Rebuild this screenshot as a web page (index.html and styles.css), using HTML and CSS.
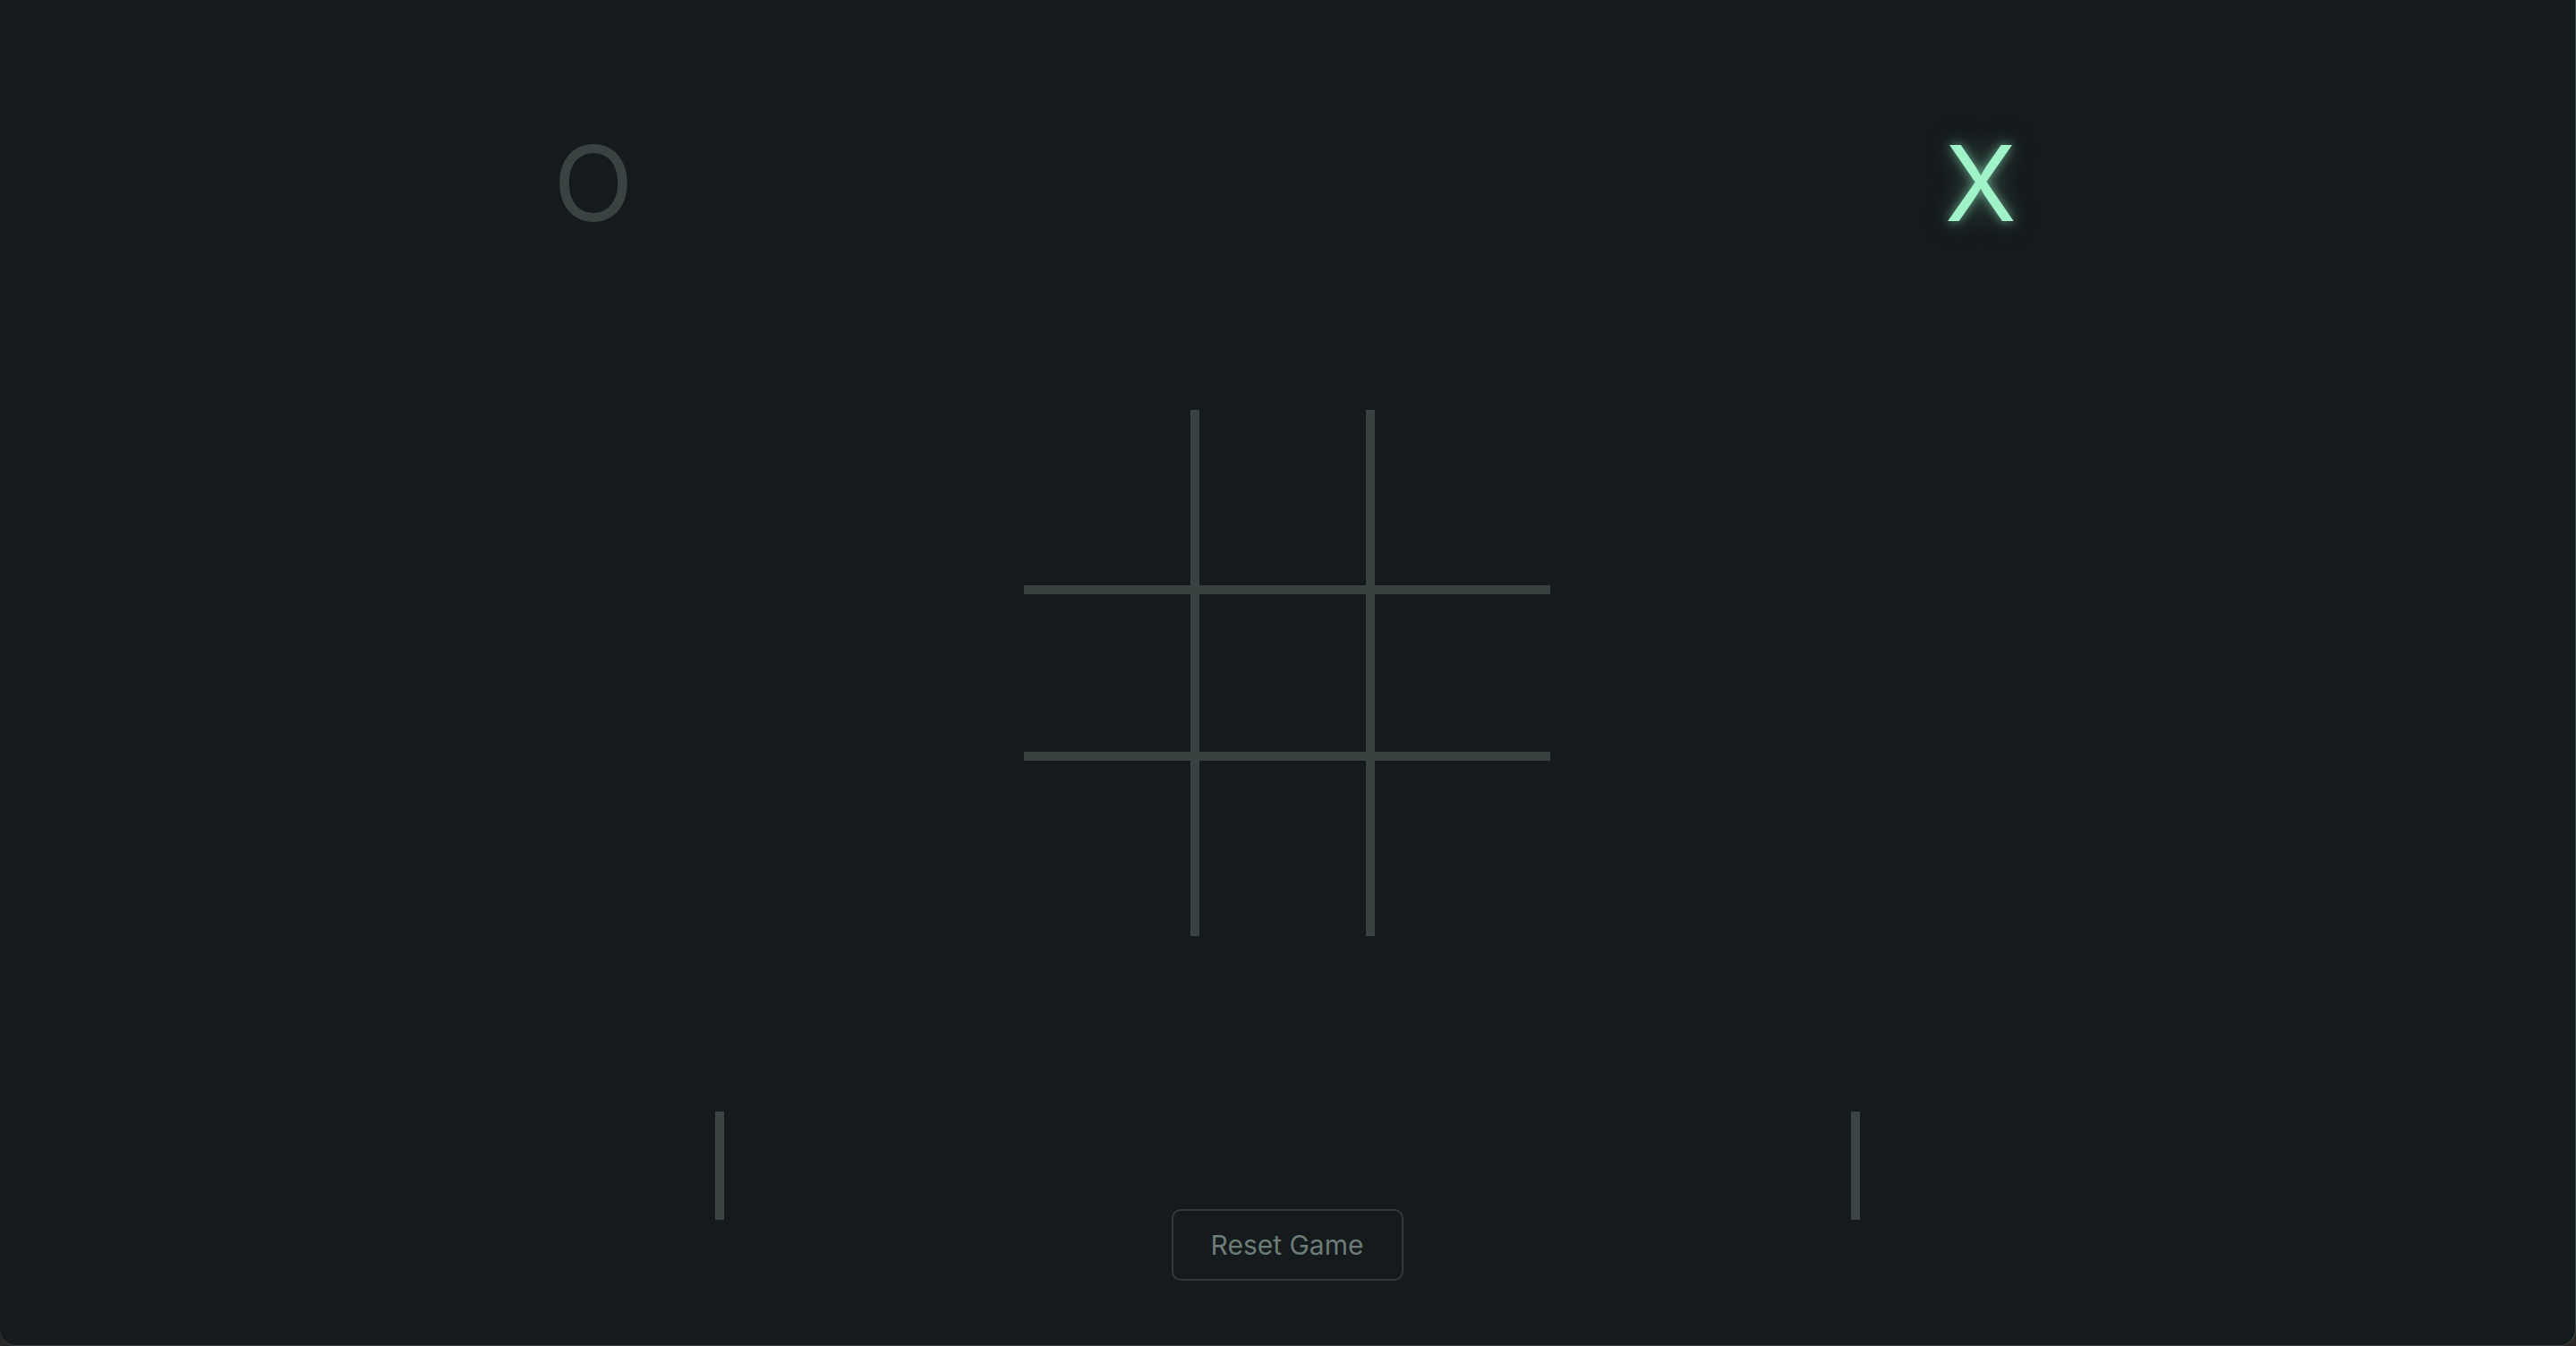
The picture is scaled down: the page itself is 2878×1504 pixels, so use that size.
FILE: index.html
```html
<!DOCTYPE html>
<html lang="en">
<head>
<meta charset="utf-8">
<title>Tic Tac Toe</title>
<link rel="stylesheet" href="styles.css">
</head>
<body>
<div class="window">
  <header class="players">
    <div class="player player-o">O</div>
    <div class="player player-x active">X</div>
  </header>
  <main class="board">
    <div class="cell c-left"></div>
    <div class="cell c-mid"></div>
    <div class="cell"></div>
    <div class="cell c-left r-mid"></div>
    <div class="cell c-mid r-mid"></div>
    <div class="cell r-mid"></div>
    <div class="cell c-left"></div>
    <div class="cell c-mid"></div>
    <div class="cell"></div>
  </main>
  <footer class="footer">
    <div class="tally"></div>
    <button class="reset">Reset Game</button>
    <div class="tally"></div>
  </footer>
</div>
</body>
</html>
```
FILE: styles.css
```css
html, body {
  margin: 0;
  padding: 0;
  background: #2a2624;
}
body {
  width: 2878px;
  height: 1504px;
  overflow: hidden;
  font-family: "Inter", "Liberation Sans", sans-serif;
}
.window {
  box-sizing: border-box;
  width: 2878px;
  height: 1504px;
  background: #151a1c;
  border-right: 1px solid #454c4d;
  border-bottom: 1px solid #3a4042;
  border-radius: 0 0 18px 18px;
  padding-top: 146px;
  display: flex;
  flex-direction: column;
  align-items: center;
}
.players {
  display: grid;
  grid-template-columns: 400px 400px;
  column-gap: 1150px;
  margin-left: -1px;
}
.player {
  font-size: 117px;
  line-height: 117px;
  height: 117px;
  text-align: center;
  color: #3a4341;
  font-weight: 400;
}
.player.active {
  color: #a0f2c9;
  text-shadow: 0 0 12px rgba(150, 240, 200, 0.6), 0 0 30px rgba(150, 240, 200, 0.35);
}
.board {
  margin-top: 195px;
  display: grid;
  grid-template-columns: repeat(3, 196px);
  grid-template-rows: repeat(3, 196px);
  margin-left: -1px;
}
.cell {
  box-sizing: border-box;
}
.c-left, .c-mid {
  border-right: 10px solid #394240;
}
.r-mid {
  border-top: 10px solid #394240;
  border-bottom: 10px solid #394240;
}
.footer {
  margin-top: 196px;
  display: flex;
  align-items: flex-start;
  gap: 500px;
  margin-left: -1px;
}
.tally {
  width: 10px;
  height: 121px;
  background: #3b4442;
}
.reset {
  margin-top: 109px;
  box-sizing: border-box;
  width: 259px;
  height: 80px;
  padding: 0;
  background: transparent;
  border: 2px solid #333b3a;
  border-radius: 10px;
  color: #6d7c77;
  font-family: "Inter", "Liberation Sans", sans-serif;
  font-size: 30px;
  font-weight: 400;
  display: flex;
  align-items: center;
  justify-content: center;
}
```
